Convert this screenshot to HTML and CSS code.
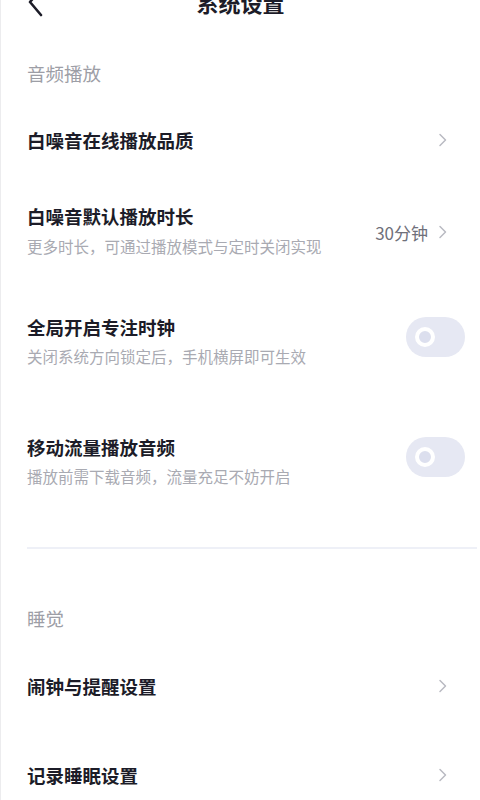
FILE: index.html
```html
<!DOCTYPE html>
<html lang="zh">
<head>
<meta charset="utf-8">
<link rel="stylesheet" href="styles.css">
</head>
<body>
<div class="page">
  <div class="header">
    <svg class="back" width="20" height="30" viewBox="0 0 20 30"><path d="M14 2 L3 15 L14 28" fill="none" stroke="#1c1c28" stroke-width="2.6" stroke-linecap="round" stroke-linejoin="round"/></svg>
    <div class="title">系统设置</div>
  </div>

  <div class="label first">音频播放</div>

  <div class="row r1">
    <div class="text"><div class="name">白噪音在线播放品质</div></div>
    <svg class="chev" width="10" height="14" viewBox="0 0 10 14"><path d="M2 1.5 L7.5 7 L2 12.5" fill="none" stroke="#b9bac2" stroke-width="1.5" stroke-linecap="round" stroke-linejoin="round"/></svg>
  </div>

  <div class="row r2">
    <div class="text">
      <div class="name">白噪音默认播放时长</div>
      <div class="sub">更多时长，可通过播放模式与定时关闭实现</div>
    </div>
    <div class="value">30分钟</div>
    <svg class="chev" width="10" height="14" viewBox="0 0 10 14"><path d="M2 1.5 L7.5 7 L2 12.5" fill="none" stroke="#b9bac2" stroke-width="1.5" stroke-linecap="round" stroke-linejoin="round"/></svg>
  </div>

  <div class="row r3">
    <div class="text">
      <div class="name">全局开启专注时钟</div>
      <div class="sub">关闭系统方向锁定后，手机横屏即可生效</div>
    </div>
    <div class="toggle"><span class="knob"></span></div>
  </div>

  <div class="row r4">
    <div class="text">
      <div class="name">移动流量播放音频</div>
      <div class="sub">播放前需下载音频，流量充足不妨开启</div>
    </div>
    <div class="toggle"><span class="knob"></span></div>
  </div>

  <div class="divider"></div>

  <div class="label second">睡觉</div>

  <div class="row r5">
    <div class="text"><div class="name">闹钟与提醒设置</div></div>
    <svg class="chev" width="10" height="14" viewBox="0 0 10 14"><path d="M2 1.5 L7.5 7 L2 12.5" fill="none" stroke="#b9bac2" stroke-width="1.5" stroke-linecap="round" stroke-linejoin="round"/></svg>
  </div>

  <div class="row r6">
    <div class="text"><div class="name">记录睡眠设置</div></div>
    <svg class="chev" width="10" height="14" viewBox="0 0 10 14"><path d="M2 1.5 L7.5 7 L2 12.5" fill="none" stroke="#b9bac2" stroke-width="1.5" stroke-linecap="round" stroke-linejoin="round"/></svg>
  </div>
</div>
</body>
</html>
```

FILE: styles.css
```css
html, body {
  margin: 0;
  padding: 0;
  background: #ffffff;
}
body {
  font-family: "Noto Sans CJK SC", "Noto Sans", sans-serif;
  overflow: hidden;
}
.page {
  width: 480px;
  height: 800px;
  box-sizing: border-box;
  border-left: 1px solid #ececee;
  overflow: hidden;
}
.header {
  margin-top: -13px;
  height: 30px;
  display: flex;
  align-items: center;
  position: relative;
}
.back {
  margin-left: 26px;
}
.title {
  position: absolute;
  left: 0;
  right: 0;
  top: 0;
  text-align: center;
  font-size: 22px;
  line-height: 30px;
  font-weight: 700;
  color: #1c1c28;
}
.label {
  height: 56px;
  display: flex;
  align-items: center;
  padding-left: 26px;
  font-size: 18.5px;
  color: #9d9ea6;
}
.label.first {
  margin-top: 28px;
}
.label.second {
  margin-top: 41px;
}
.row {
  display: flex;
  align-items: center;
  padding-left: 26px;
  padding-right: 32px;
}
.row .text {
  flex: 1;
  display: flex;
  flex-direction: column;
  gap: 7px;
}
.name {
  font-size: 18.5px;
  line-height: 24px;
  font-weight: 700;
  color: #1c1c28;
}
.sub {
  font-size: 15.5px;
  line-height: 20px;
  color: #a9aab2;
}
.r1 { height: 78px; }
.r2 { height: 102px; }
.r3 { height: 118px; padding-right: 15px; }
.r4 { height: 122px; padding-right: 15px; }
.r5 { height: 80px; }
.r6 { height: 98px; }
.r2 .text { gap: 8px; }
.r2 .value {
  font-size: 17px;
  color: #6f707a;
  margin-right: 10px;
  margin-top: 4px;
}
.r2 .chev {
  margin-top: 4px;
}
.chev {
  display: block;
}
.r3 .toggle { margin-top: -6px; }
.r4 .toggle { margin-top: -6px; }
.toggle {
  width: 59px;
  height: 40px;
  border-radius: 20px;
  background: #e6e8f3;
  display: flex;
  align-items: center;
  padding-left: 9px;
  box-sizing: border-box;
}
.knob {
  width: 20px;
  height: 20px;
  box-sizing: border-box;
  border-radius: 50%;
  border: 4.5px solid #ffffff;
  background: #dcdfee;
}
.divider {
  height: 2px;
  background: #eef0f7;
  margin: 26px 3px 0 26px;
}
```
